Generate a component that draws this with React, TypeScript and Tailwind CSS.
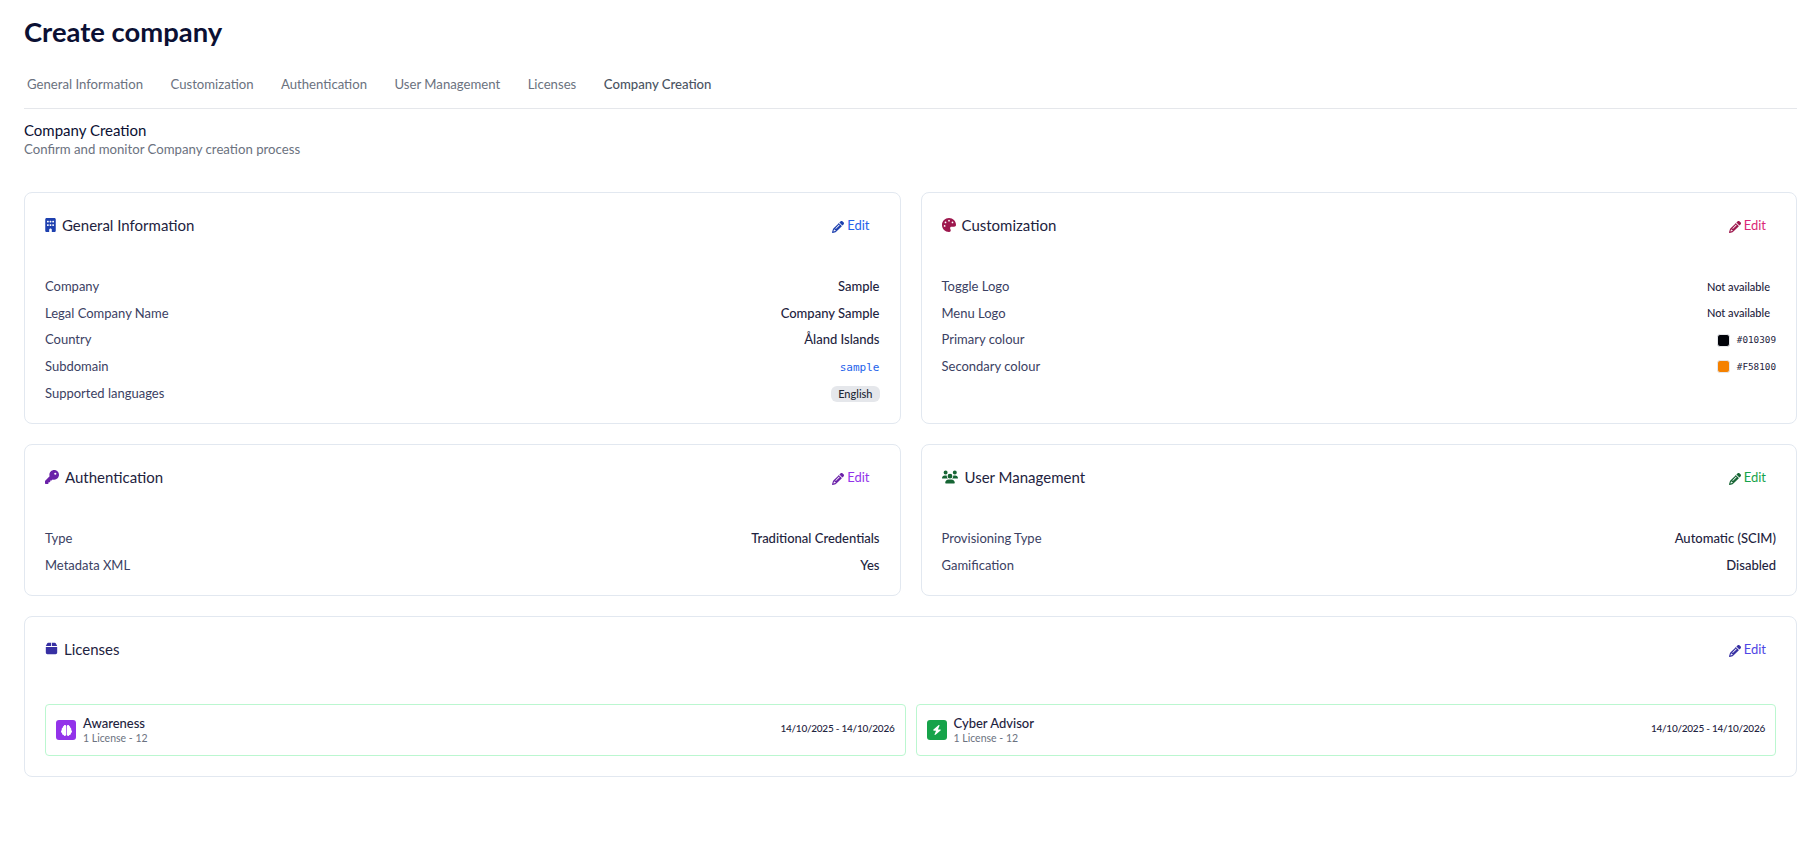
import type { ReactNode } from 'react';
import { FaBolt, FaBox, FaBrain, FaBuilding, FaKey, FaPalette, FaPencil, FaUsers } from 'react-icons/fa6';

const tabs = ['General Information', 'Customization', 'Authentication', 'User Management', 'Licenses', 'Company Creation'];

function Card({
  icon,
  title,
  editClass,
  penClass,
  children,
  className,
}: {
  icon: ReactNode;
  title: string;
  editClass: string;
  penClass: string;
  children: ReactNode;
  className: string;
}) {
  return (
    <div className={`rounded-lg border border-[#e2e8f0] bg-white px-5 ${className}`}>
      <div className="mt-[15px] flex h-[32px] items-center justify-between pt-[1px]">
        <div className="flex items-center text-[15px] leading-[22px] text-[#1e2340]">
          {icon}
          {title}
        </div>
        <div className="mt-[2px] mr-[10px] flex items-center text-[13px]">
          <FaPencil className={`mt-[2px] mr-[3px] h-[12px] w-[12px] ${penClass}`} />
          <span className={editClass}>Edit</span>
        </div>
      </div>
      {children}
    </div>
  );
}

function Row({ label, children }: { label: string; children: ReactNode }) {
  return (
    <div className="flex h-[26.7px] items-center justify-between text-[13px] text-[#3b4163]">
      <span>{label}</span>
      {children}
    </div>
  );
}

function Value({ children }: { children: ReactNode }) {
  return <span className="font-medium text-[#1e2340]">{children}</span>;
}

function Colour({ swatch, hex }: { swatch: string; hex: string }) {
  return (
    <span className="flex items-center gap-[7px]">
      <span className={`h-[13px] w-[13px] rounded-[3px] border border-[#e5e7eb] ${swatch}`} />
      <span className="font-['DejaVu_Sans_Mono',monospace] text-[9.3px] text-[#1e2340]">{hex}</span>
    </span>
  );
}

function LicenseItem({ icon, bg, name }: { icon: ReactNode; bg: string; name: string }) {
  return (
    <div className="flex h-[52px] flex-1 items-center justify-between rounded border border-[#bbf7d0] pr-[10px] pl-[10px]">
      <div className="flex items-center gap-[7px]">
        <div className={`flex h-[20px] w-[20px] items-center justify-center rounded-[3px] text-white ${bg}`}>{icon}</div>
        <div>
          <div className="text-[13px] leading-[15px] font-medium text-[#1e2340]">{name}</div>
          <div className="text-[10.5px] leading-[14px] text-[#6b7280]">1 License - 12</div>
        </div>
      </div>
      <span className="mb-[3px] text-[10px] font-medium tracking-[-0.25px] text-[#1e2340]">14/10/2025 - 14/10/2026</span>
    </div>
  );
}

export default function App() {
  return (
    <div className="min-h-[846px] bg-white pr-[5px] pl-[24px] font-['Lato',sans-serif]">
      <h1 className="pt-[16px] text-[27.4px] leading-[32px] font-bold text-[#0b1033]">Create company</h1>

      {/* Tabs */}
      <div className="mt-[21px] flex h-[40px] gap-[27.5px] border-b border-[#e5e7eb] pl-[3px] text-[13.15px] text-[#6b7280]">
        {tabs.map((tab) => (
          <span key={tab} className={tab === 'Company Creation' ? 'pt-[6px] font-medium text-[#4b5563]' : 'pt-[6px]'}>
            {tab}
          </span>
        ))}
      </div>

      <div className="mt-[11px] text-[15px] leading-[20px] text-[#0b1033]">Company Creation</div>
      <div className="text-[13.2px] leading-[18px] text-[#6b7280]">Confirm and monitor Company creation process</div>

      <div className="mt-[34px] grid grid-cols-2 gap-[20px]">
        <Card
          className="h-[232px]"
          title="General Information"
          editClass="text-[#2563eb]"
          penClass="text-[#1e40af]"
          icon={<FaBuilding className="mr-[6px] h-[14px] w-[11px] text-[#1e40af]" />}
        >
          <div className="mt-[33.5px]">
            <Row label="Company"><Value>Sample</Value></Row>
            <Row label="Legal Company Name"><Value>Company Sample</Value></Row>
            <Row label="Country"><Value>Åland Islands</Value></Row>
            <Row label="Subdomain">
              <span className="mt-[2px] font-['DejaVu_Sans_Mono',monospace] text-[11px] text-[#2563eb]">sample</span>
            </Row>
            <Row label="Supported languages">
              <span className="rounded-md bg-[#e5e7eb] px-[7px] text-[11px] leading-[16px] font-medium text-[#1f2937]">English</span>
            </Row>
          </div>
        </Card>

        <Card
          className="h-[232px]"
          title="Customization"
          editClass="text-[#db2777]"
          penClass="text-[#9d174d]"
          icon={<FaPalette className="mr-[6px] h-[14px] w-[14px] text-[#9d174d]" />}
        >
          <div className="mt-[33.5px]">
            <Row label="Toggle Logo"><span className="mr-[6px] text-[11px] font-medium text-[#1e2340]">Not available</span></Row>
            <Row label="Menu Logo"><span className="mr-[6px] text-[11px] font-medium text-[#1e2340]">Not available</span></Row>
            <Row label="Primary colour"><Colour swatch="bg-[#010309]" hex="#010309" /></Row>
            <Row label="Secondary colour"><Colour swatch="bg-[#F58100]" hex="#F58100" /></Row>
          </div>
        </Card>

        <Card
          className="h-[152px]"
          title="Authentication"
          editClass="text-[#9333ea]"
          penClass="text-[#6b21a8]"
          icon={<FaKey className="mr-[6px] h-[14px] w-[14px] text-[#6b21a8]" />}
        >
          <div className="mt-[33.5px]">
            <Row label="Type"><Value>Traditional Credentials</Value></Row>
            <Row label="Metadata XML"><Value>Yes</Value></Row>
          </div>
        </Card>

        <Card
          className="h-[152px]"
          title="User Management"
          editClass="text-[#16a34a]"
          penClass="text-[#166534]"
          icon={<FaUsers className="mr-[7px] h-[14px] w-[16px] text-[#166534]" />}
        >
          <div className="mt-[33.5px]">
            <Row label="Provisioning Type"><Value>Automatic (SCIM)</Value></Row>
            <Row label="Gamification"><Value>Disabled</Value></Row>
          </div>
        </Card>

        <Card
          className="col-span-2 h-[161px]"
          title="Licenses"
          editClass="text-[#4f46e5]"
          penClass="text-[#3730a3]"
          icon={<FaBox className="mr-[6px] h-[13px] w-[13px] text-[#3730a3]" />}
        >
          <div className="mt-[40px] flex gap-[10px]">
            <LicenseItem name="Awareness" bg="bg-[#9333ea]" icon={<FaBrain className="h-[11px] w-[11px]" />} />
            <LicenseItem name="Cyber Advisor" bg="bg-[#16a34a]" icon={<FaBolt className="h-[10px] w-[10px]" />} />
          </div>
        </Card>
      </div>
    </div>
  );
}
